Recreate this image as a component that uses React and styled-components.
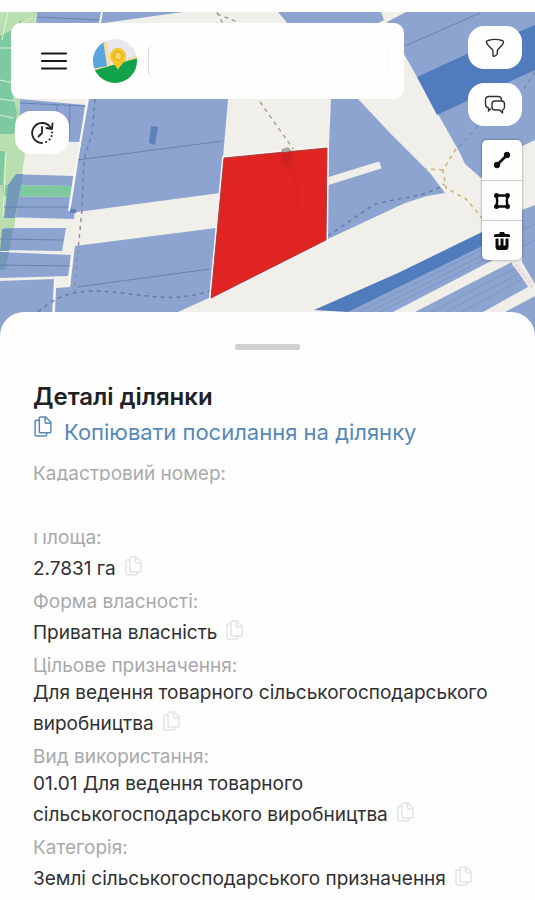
import React from 'react';
import styled, { createGlobalStyle } from 'styled-components';

const GlobalStyle = createGlobalStyle`
	* {
		box-sizing: border-box;
	}
	body {
		margin: 0;
		background: #fefefe;
		font-family: Inter, 'Noto Sans', sans-serif;
		color: #2f3033;
	}
	button {
		font: inherit;
		color: inherit;
		border: 0;
		padding: 0;
		background: none;
		cursor: pointer;
	}
`;

const Page = styled.div`
	padding-top: 12px;
	overflow: hidden;
`;

const MapArea = styled.section`
	position: relative;
	min-height: 324px;
	padding: 11px 13px 64px 11px;
	display: flex;
	justify-content: space-between;
	align-items: flex-start;
	gap: 64px;
`;

const MapCanvas = styled.svg`
	position: absolute;
	inset: 0;
	width: 100%;
	height: 100%;
	background: #f1efe9;
`;

const LeftControls = styled.div`
	position: relative;
	flex: 1;
	min-width: 0;
	display: flex;
	flex-direction: column;
	align-items: flex-start;
	gap: 12px;
`;

const RightControls = styled.div`
	position: relative;
	display: flex;
	flex-direction: column;
	align-items: flex-end;
	gap: 14px;
	padding-top: 3px;
`;

const SearchBar = styled.header`
	width: 100%;
	height: 76px;
	padding: 0 16px 0 27px;
	display: flex;
	align-items: center;
	border-radius: 10px;
	background: #fefefe;
`;

const MenuButton = styled.button`
	display: flex;
	margin-right: 22px;
`;

const Logo = styled.svg`
	width: 46px;
	height: 46px;
	flex: none;
	margin-right: 10px;
`;

const SearchInput = styled.input`
	flex: 1;
	min-width: 0;
	height: 32px;
	border: 0;
	border-left: 1px solid #dcdcdc;
	border-right: 1px solid #f6f6f6;
	border-radius: 5px;
	background: transparent;
	font: inherit;
	outline: none;
`;

const RoundButton = styled.button`
	width: 54px;
	height: 43px;
	margin-left: ${(props) => (props.$inset ? '4px' : '0')};
	display: flex;
	align-items: center;
	justify-content: center;
	border-radius: 16px;
	background: #fefefe;
`;

const DrawTools = styled.div`
	width: 40px;
	border-radius: 5px;
	background: #fefefe;
	box-shadow: 0 0 3px #00000066;
`;

const ToolButton = styled.button`
	width: 100%;
	height: 40px;
	display: flex;
	align-items: center;
	justify-content: center;
	& + & {
		border-top: 1px solid #cccccc;
	}
`;

const Sheet = styled.main`
	position: relative;
	margin-top: -24px;
	padding: 32px 33px 0;
	border-radius: 24px 24px 0 0;
	background: #fefefe;
`;

const Handle = styled.div`
	width: 65px;
	height: 6px;
	margin: 0 auto 31px;
	border-radius: 2px;
	background: #d1d1d4;
`;

const Title = styled.h1`
	margin: 0;
	font-size: 24px;
	line-height: 32px;
	font-weight: 600;
	color: #202126;
`;

const CopyLink = styled.a`
	display: flex;
	align-items: center;
	gap: 12px;
	padding-left: 1px;
	font-size: 22px;
	line-height: 38px;
	color: #5588b8;
	text-decoration: none;
	svg {
		margin-bottom: 12px;
	}
`;

const Details = styled.dl`
	margin: 9px 0 0;
	font-size: 19px;
	line-height: 27px;
`;

const Label = styled.dt`
	color: #a9a9ab;
`;

const Value = styled.dd`
	margin: 0;
`;

const HiddenValue = styled.dd`
	position: relative;
	width: 120px;
	height: 52px;
	margin: -6px 0 -9px;
	background: #fefefe;
`;

const CopyButton = styled.button`
	height: 37px;
	margin-left: 9px;
	padding-bottom: 8px;
	display: inline-flex;
	align-items: center;
	vertical-align: middle;
	color: #e2e2e3;
`;

const fields = [
	{ label: 'Кадастровий номер:', hidden: true },
	{ label: 'Площа:', value: '2.7831 га' },
	{ label: 'Форма власності:', value: 'Приватна власність' },
	{
		label: 'Цільове призначення:',
		value: 'Для ведення товарного сільськогосподарського виробництва',
	},
	{
		label: 'Вид використання:',
		value: '01.01 Для ведення товарного сільськогосподарського виробництва',
	},
	{ label: 'Категорія:', value: 'Землі сільськогосподарського призначення' },
];

const CopyIcon = ({ width = 17, height = 20 }) => (
	<svg
		width={width}
		height={height}
		viewBox="0 0 17 20"
		fill="none"
		stroke="currentColor"
		strokeWidth="1.4"
		strokeLinejoin="round"
	>
		<path d="M5 4H2Q1 4 1 5v13q0 1 1 1h9q1 0 1-1v-2" />
		<path d="M6 1h5l5 5v9q0 1-1 1H6q-1 0-1-1V2q0-1 1-1z" />
		<path d="M10.5 1v5q0 1 1 1H16" />
	</svg>
);

const ParcelMap = () => (
	<MapCanvas viewBox="0 12 535 324" preserveAspectRatio="xMidYMin slice" aria-hidden="true">
		<g fill="#8ca4cf">
			<path d="M37 12H183L104 23H36zM278 12H381L384 20L376 24H288zM406 12H535V140L522 146L481 178L465 164L460 153L404 54L387 22z" />
			<path d="M20 99L85 105L80 142L18 141zM88 99H228L220 193L70 213zM75 246L216 228L211 297L178 312L170 336H54L56 288L70 287z" />
			<path d="M8 174L74 176L72 186L3 185zM3 196L70 197L69 207L75 208L74 219L4 217zM2 228L66 228L62 251L0 250zM0 252L71 255L68 276L0 278zM0 281L55 279L53 336H0z" />
			<path d="M331 99H358L392 135L430 173L445 193L427 196L405 203L328 239V170z" />
			<path d="M348 312L482 242L495 259L393 312zM415 312L512 262L528 287L483 312zM505 312L535 296V336H505zM522 210L535 205V284L522 262z" />
		</g>
		<path d="M417 77L467 54L535 25V70L467 101L437 115zM314 310L398 273L482 232V246L348 312z" fill="#507cbe" />

		{/* green belt along the left edge */}
		<path d="M0 12H37L20 99L18 141L25 154L14 228L4 228L0 262z" fill="#b9dfb0" />
		<path d="M0 36L12 30L21 20L14 100L17 112L14 134H0zM0 151H5L3 185H0zM3 185L72 186L71 197L3 196z" fill="#7dc9a0" />
		<path d="M16 174H23L15 218H4L8 185zM2 229H13L9 251H0zM0 252H9L5 270H0z" fill="#7398ba" />
		<g stroke="#e3f0dc" fill="none">
			<path d="M0 48H18M0 80L14 83M0 99L15 101M0 115L13 118M8 12L2 40M6 153L3 216" />
			<path d="M20 24L33 17M18 22L14 100" />
		</g>

		<g stroke="#6683b2" fill="none">
			<path d="M37 17L100 20L104 12M20 103L85 106M70 104L69 141M57 104V112M77 160L223 141M77 287L210 269M405 46L480 13" />
			<path d="M0 239L63 240M0 265L70 266M4 207L70 207" />
		</g>
		<g stroke="#7b96c7" fill="none">
			<path d="M359 312L485 248M369 312L489 252M380 312L492 256M431 312L516 268M446 312L520 273M462 312L524 278M522 230L535 224M522 247L535 240" />
		</g>
		<path d="M151 126L158 127L155 145L149 143zM70 209H76V213H70z" fill="#5d80b8" />

		<path d="M327 178L379 162L381 168L327 185z" fill="#f1efe9" stroke="#f1efe9" />
		<path d="M102 12L100 23M88 99L76 165L69 211" stroke="#f8f7f3" strokeWidth="2" fill="none" />
		<path d="M55 279L53 316M72 255L69 287" stroke="#f8f7f3" strokeWidth="2" fill="none" />
		<path d="M514 262L533 287" stroke="#eee4e6" strokeWidth="6" />
		<path d="M516 265L534 290" stroke="#d6bfc7" strokeDasharray="2 3" />

		{/* field tracks */}
		<g fill="none" strokeDasharray="4 4">
			<path d="M95 99L92 133L84 160L82 210" stroke="#6785a9" strokeWidth="1.5" />
			<path d="M82 210L78 250L74 294" stroke="#95909b" strokeWidth="1.5" />
			<path d="M38 312C65 288 90 289 130 294C165 298 180 300 210 291" stroke="#647f98" strokeWidth="1.5" />
			<path d="M328 236L373 205C395 197 425 199 444 184" stroke="#5f7da6" strokeWidth="1.5" />
			<path d="M535 72L519 96M478 126L458 148" stroke="#607da8" />
			<path d="M456 149L443 170L446 188L466 199L482 218M443 170L425 169" stroke="#c9b57c" strokeWidth="1.5" />
			<path d="M260 102L294 150M217 12L225 28M217 14L238 22" stroke="#a5a198" strokeWidth="1.5" />
		</g>

		<path d="M224 158L327 148L326 240L211 298z" fill="#df2422" stroke="#faf4ef" strokeWidth="4" />
		<path d="M224 158L327 148L326 240L211 298z" fill="#df2422" stroke="#a43e47" strokeWidth="1" />
		<path d="M292 164L297 190L299 216" stroke="#d22021" strokeWidth="1.5" strokeDasharray="4 3" fill="none" />
		<path d="M281 153L293 152L289 168L282 164z" fill="#cf2122" />
		<path d="M282 149L288 147L292 151L281 152z" fill="#aaa79b" />
	</MapCanvas>
);

const LogoMark = () => (
	<Logo viewBox="0 0 46 46" role="img" aria-label="Карта">
		<defs>
			<clipPath id="logo-circle">
				<circle cx="23" cy="23" r="22" />
			</clipPath>
		</defs>
		<g clipPath="url(#logo-circle)">
			<rect width="46" height="46" fill="#e9e7ee" />
			<path d="M0 0H12L17 28L0 34z" fill="#5ba5de" />
			<path d="M11 3L14 2L19 27L46 17V23L0 35V31L15 28z" fill="#f4dda0" />
			<path d="M0 33L46 20V46H0z" fill="#13a24c" />
			<path d="M26 32C24 27 18 24 18 18a8 8 0 0 1 16 0c0 6-6 9-8 14z" fill="#f5c72b" />
			<circle cx="26" cy="18" r="4" fill="#f8d95c" stroke="#e9a922" strokeWidth="1.5" />
		</g>
	</Logo>
);

const App = () => (
	<Page>
		<GlobalStyle />
		<MapArea>
			<ParcelMap />
			<LeftControls>
				<SearchBar>
					<MenuButton aria-label="Меню">
						<svg width="32" height="24" viewBox="0 0 32 24" stroke="#171717" strokeWidth="2.2" strokeLinecap="round">
							<path d="M4 4.5H28M4 12H28M4 19.5H28" />
						</svg>
					</MenuButton>
					<LogoMark />
					<SearchInput type="search" aria-label="Пошук" />
				</SearchBar>
				<RoundButton $inset aria-label="Історія">
					<svg width="24" height="24" viewBox="0 0 24 24" fill="none" stroke="#242424" strokeWidth="1.8" strokeLinecap="round" strokeLinejoin="round">
						<path d="M12 22A10 10 0 1 1 20.5 6.5" />
						<path d="M22.5 2.5L22 8L16.5 7M12 6V12L8.5 15.5" />
						<path d="M16 21h.1M19.5 18.5h.1M21.5 15h.1M22 11.5h.1" strokeWidth="2" />
					</svg>
				</RoundButton>
			</LeftControls>
			<RightControls>
				<RoundButton aria-label="Фільтр">
					<svg width="20" height="20" viewBox="0 0 20 20" fill="none" stroke="#303030" strokeWidth="1.4" strokeLinejoin="round">
						<path d="M3 2.5C7 1.2 13 1.2 17 2.5C19.2 3.3 18.7 5 17.5 6.5L13 11.5Q12.3 12.3 12.3 13.5V15.5Q12.3 16.5 11.5 17L9 18.3Q8 18.7 8 17.5V13.5Q8 12.3 7.2 11.5L2.5 6.5C1.2 5 .8 3.3 3 2.5z" />
					</svg>
				</RoundButton>
				<RoundButton aria-label="Чат">
					<svg width="22" height="20" viewBox="0 0 22 20" fill="none" stroke="#303030" strokeWidth="1.4" strokeLinejoin="round">
						<path d="M7 13.5L4.5 16V13C2 12.5 1.5 11 1.5 9V5Q1.5 1.5 5 1.5H14Q17.5 1.5 17.5 5V6" />
						<path d="M11 6H17.5Q20.5 6 20.5 9V12Q20.5 14.5 18.5 15V18L15.5 15H11Q8 15 8 12V9Q8 6 11 6z" />
					</svg>
				</RoundButton>
				<DrawTools>
					<ToolButton aria-label="Лінія">
						<svg width="18" height="18" viewBox="0 0 18 18" stroke="#0c0c0c" fill="#0c0c0c">
							<path d="M4 14L14 4" strokeWidth="2.6" />
							<circle cx="4" cy="14" r="2.8" />
							<circle cx="14" cy="4" r="2.8" />
						</svg>
					</ToolButton>
					<ToolButton aria-label="Полігон">
						<svg width="18" height="18" viewBox="0 0 18 18" fill="#0c0c0c">
							<path d="M3.5 3.5H14.5L13.8 9L14.5 14.5H3.5L4.2 9z" fill="none" stroke="#0c0c0c" strokeWidth="2.4" />
							<circle cx="3.5" cy="3.5" r="2.5" />
							<circle cx="14.5" cy="3.5" r="2.5" />
							<circle cx="3.5" cy="14.5" r="2.5" />
							<circle cx="14.5" cy="14.5" r="2.5" />
						</svg>
					</ToolButton>
					<ToolButton aria-label="Видалити">
						<svg width="18" height="20" viewBox="0 0 18 20" fill="#0c0c0c">
							<path d="M1 6V4.5Q1 3 3 3H6L7 1H11L12 3H15Q17 3 17 4.5V6z" />
							<path d="M2.5 7.5H5.5V14.5H7.5V7.5H10.5V14.5H12.5V7.5H15.5V15.5Q15.5 19 12.5 19H5.5Q2.5 19 2.5 15.5z" />
						</svg>
					</ToolButton>
				</DrawTools>
			</RightControls>
		</MapArea>

		<Sheet>
			<Handle />
			<Title>Деталі ділянки</Title>
			<CopyLink href="#parcel">
				<CopyIcon width={18} height={21} />
				<span>Копіювати посилання на ділянку</span>
			</CopyLink>
			<Details>
				{fields.map(({ label, value, hidden }) => (
					<React.Fragment key={label}>
						<Label>{label}</Label>
						{hidden ? (
							<HiddenValue />
						) : (
							<Value>
								{value}
								<CopyButton aria-label="Копіювати">
									<CopyIcon />
								</CopyButton>
							</Value>
						)}
					</React.Fragment>
				))}
			</Details>
		</Sheet>
	</Page>
);

export default App;
